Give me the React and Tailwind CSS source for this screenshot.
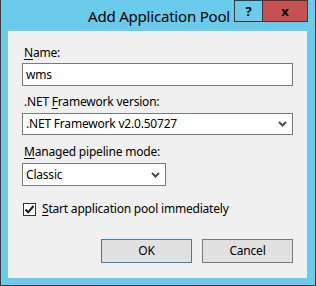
import React from 'react';

function Chevron() {
  return (
    <svg width="9" height="6" viewBox="0 0 9 6" className="shrink-0">
      <polyline points="1,1 4.5,4.5 8,1" fill="none" stroke="#4d4d4d" strokeWidth="2" />
    </svg>
  );
}

export default function App() {
  return (
    <div className="w-[316px] h-[286px] bg-[#6bcbeb] border border-t-0 border-[#3b3b3b] flex flex-col font-['Noto_Sans',sans-serif] text-[12px] text-black">

      {/* Title bar */}
      <div className="relative h-[31px] shrink-0 flex items-center justify-center">
        <span className="text-[15px] leading-none pt-[1px] ml-[2px] tracking-[-0.2px]">Add Application Pool</span>
        <div className="absolute top-0 right-[7px] flex h-[22px]">
          <div className="w-[29px] h-full border border-[#3b3b3b] flex items-center justify-center font-bold text-[13px] leading-none">?</div>
          <div className="w-[45px] h-full border border-l-0 border-[#3b3b3b] bg-[#c75050] flex items-center justify-center font-bold text-[13px] leading-none">x</div>
        </div>
      </div>

      {/* Content */}
      <div className="ml-[7px] mr-[8px] mb-[7px] flex-1 bg-[#f0f0f0] pl-[14px] pr-[14px] pt-[14px] flex flex-col">
        <div className="h-[16px] leading-[16px] pl-[2px] tracking-[-0.2px]"><u className="underline-offset-2">N</u>ame:</div>
        <div className="mt-[2px] h-[23px] bg-white border border-[#7a7a7a] flex items-center pl-[3px] tracking-[-0.2px]">wms</div>

        <div className="mt-[8px] h-[16px] leading-[16px] pl-[2px] tracking-[-0.2px]">.NET <u className="underline-offset-2">F</u>ramework version:</div>
        <div className="mt-[3px] h-[22px] bg-white border border-[#7a7a7a] flex items-center justify-between pl-[3px] pr-[5px] tracking-[-0.2px]">
          <span>.NET Framework v2.0.50727</span>
          <Chevron />
        </div>

        <div className="mt-[9px] h-[16px] leading-[16px] pl-[2px] tracking-[-0.2px]"><u className="underline-offset-2">M</u>anaged pipeline mode:</div>
        <div className="mt-[3px] w-[144px] h-[23px] bg-white border border-[#7a7a7a] flex items-center justify-between pl-[3px] pr-[5px] tracking-[-0.2px]">
          <span>Classic</span>
          <Chevron />
        </div>

        <div className="mt-[15px] h-[16px] flex items-center gap-[6px] pl-[1px]">
          <div className="w-[13px] h-[13px] bg-white border border-[#333333] flex items-center justify-center">
            <svg width="11" height="11" viewBox="0 0 11 11">
              <path d="M1.5 5.5 L4.2 8.3 L9.5 2" fill="none" stroke="#1a1a1a" strokeWidth="2" />
            </svg>
          </div>
          <span className="leading-[16px] tracking-[-0.2px]"><u className="underline-offset-2">S</u>tart application pool immediately</span>
        </div>

        <div className="mt-[22px] flex justify-end gap-[10px]">
          <button className="w-[91px] h-[24px] bg-[#e1e1e1] border border-[#3c7fb1] tracking-[-0.2px]">OK</button>
          <button className="w-[91px] h-[24px] bg-[#e1e1e1] border border-[#7a7a7a] tracking-[-0.2px]">Cancel</button>
        </div>
      </div>
    </div>
  );
}
